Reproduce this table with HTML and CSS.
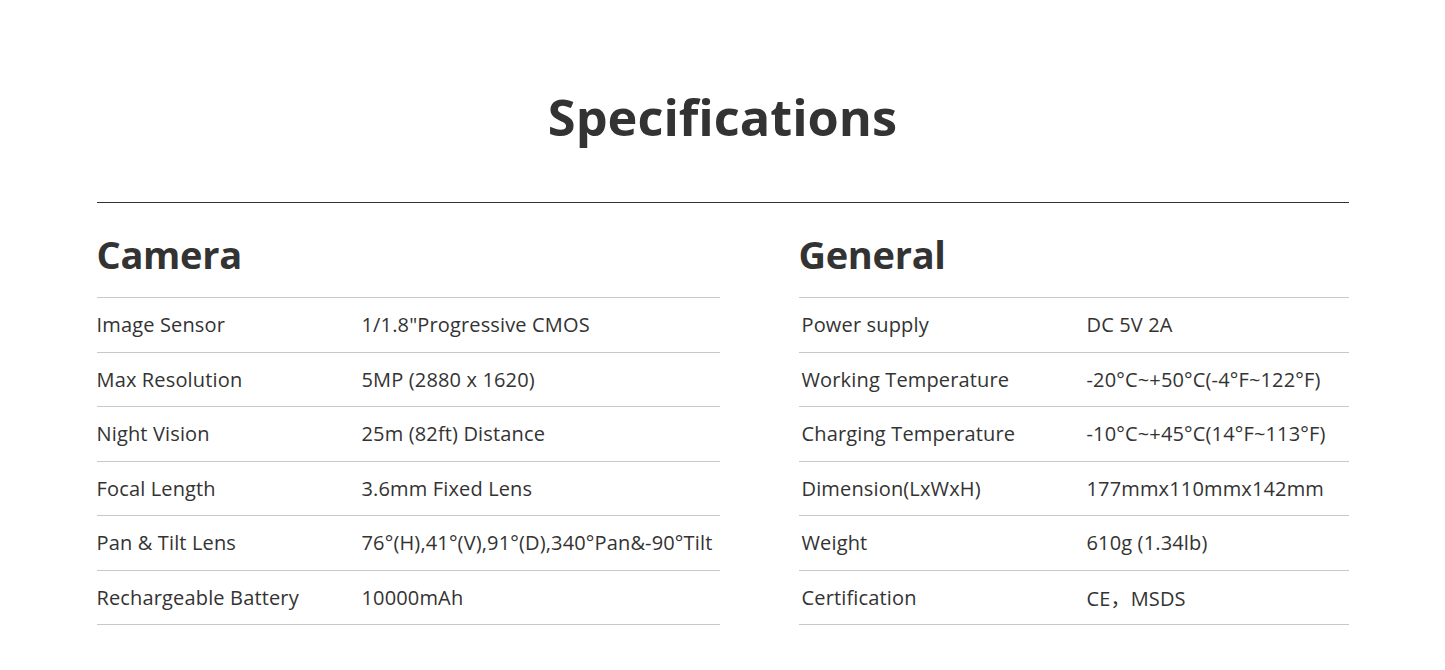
FILE: index.html
```html
<!DOCTYPE html>
<html lang="en">
<head>
<meta charset="utf-8">
<title>Specifications</title>
<link rel="stylesheet" href="styles.css">
</head>
<body>
<main class="page">
  <h1 class="title">Specifications</h1>
  <div class="specs">
    <section class="group">
      <h2 class="group-title">Camera</h2>
      <div class="table table-camera">
        <div class="row"><span class="label">Image Sensor</span><span class="value">1/1.8"Progressive CMOS</span></div>
        <div class="row"><span class="label">Max Resolution</span><span class="value">5MP (2880 x 1620)</span></div>
        <div class="row"><span class="label">Night Vision</span><span class="value">25m (82ft) Distance</span></div>
        <div class="row"><span class="label">Focal Length</span><span class="value">3.6mm Fixed Lens</span></div>
        <div class="row"><span class="label">Pan &amp; Tilt Lens</span><span class="value">76°(H),41°(V),91°(D),340°Pan&amp;-90°Tilt</span></div>
        <div class="row"><span class="label">Rechargeable Battery</span><span class="value">10000mAh</span></div>
      </div>
    </section>
    <section class="group">
      <h2 class="group-title">General</h2>
      <div class="table table-general">
        <div class="row"><span class="label">Power supply</span><span class="value">DC 5V 2A</span></div>
        <div class="row"><span class="label">Working Temperature</span><span class="value">-20°C~+50°C(-4°F~122°F)</span></div>
        <div class="row"><span class="label">Charging Temperature</span><span class="value">-10°C~+45°C(14°F~113°F)</span></div>
        <div class="row"><span class="label">Dimension(LxWxH)</span><span class="value">177mmx110mmx142mm</span></div>
        <div class="row"><span class="label">Weight</span><span class="value">610g (1.34lb)</span></div>
        <div class="row"><span class="label">Certification</span><span class="value">CE，MSDS</span></div>
      </div>
    </section>
  </div>
</main>
</body>
</html>
```
FILE: styles.css
```css
* { box-sizing: border-box; }
html, body { margin: 0; padding: 0; background: #fff; }
body {
  font-family: "Open Sans", "Noto Sans", "Noto Sans CJK SC", sans-serif;
  color: #333;
}
.page {
  width: 1252px;
  margin: 0 auto;
  padding-top: 82px;
}
.title {
  margin: 0;
  text-align: center;
  font-size: 50.5px;
  font-weight: 700;
  line-height: 70px;
  letter-spacing: 0;
  color: #333;
  padding-bottom: 50px;
  border-bottom: 1px solid #333;
}
.specs {
  display: grid;
  grid-template-columns: 623px 550px;
  justify-content: space-between;
}
.group-title {
  margin: 0;
  padding: 24px 0 0 0;
  height: 95px;
  font-size: 38px;
  line-height: 54px;
  font-weight: 700;
  letter-spacing: -0.3px;
  color: #333;
  border-bottom: 1px solid #c8c8c8;
}
.row {
  display: grid;
  height: 54.5px;
  align-items: center;
  border-bottom: 1px solid #c8c8c8;
  font-size: 20px;
  letter-spacing: 0.15px;
  color: #333;
}
.table-camera .row { grid-template-columns: 265px 1fr; }
.table-general .row { grid-template-columns: 288px 1fr; }
.table-general .label { padding-left: 3px; }
```
